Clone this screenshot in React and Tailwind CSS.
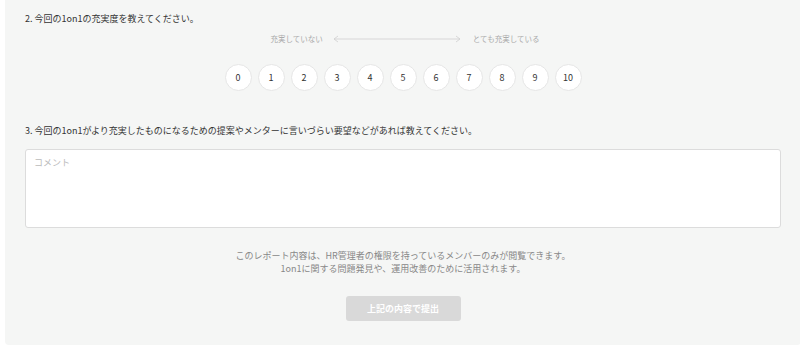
export default function App() {
  const nums = [0, 1, 2, 3, 4, 5, 6, 7, 8, 9, 10];
  return (
    <div className="w-[800px] h-[347px] bg-white overflow-hidden" style={{ fontFamily: '"Noto Sans CJK JP", "Noto Sans", sans-serif' }}>
      <div className="ml-[5px] w-[796px] bg-[#f5f6f5] rounded-b-[4px] px-[20px] pt-[12px] pb-[24px] flex flex-col">
        <p className="text-[9px] leading-[13px] text-[#333]">2. 今回の1on1の充実度を教えてください。</p>
        <div className="mt-[7px] h-[14px] flex items-center justify-center gap-[10px] text-[7.5px] text-[#aaa] pl-[4px]">
          <span>充実していない</span>
          <svg width="128" height="8" viewBox="0 0 128 8" className="block">
            <line x1="1" y1="4" x2="127" y2="4" stroke="#cfcfcf" strokeWidth="0.8" />
            <polyline points="5,1 1,4 5,7" fill="none" stroke="#cfcfcf" strokeWidth="0.8" />
            <polyline points="123,1 127,4 123,7" fill="none" stroke="#cfcfcf" strokeWidth="0.8" />
          </svg>
          <span className="ml-[2px]">とても充実している</span>
        </div>
        <div className="mt-[18px] flex justify-center gap-[6px]">
          {nums.map((n) => (
            <div key={n} className="w-[27px] h-[27px] rounded-full bg-white border border-[#e6e6e6] flex items-center justify-center text-[9px] text-[#333]">
              {n}
            </div>
          ))}
        </div>
        <p className="mt-[33px] text-[9px] leading-[13px] text-[#333]">3. 今回の1on1がより充実したものになるための提案やメンターに言いづらい要望などがあれば教えてください。</p>
        <div className="mt-[12px] h-[79px] bg-white border border-[#dcdcdc] rounded-[3px] px-[8px] pt-[6px] text-[9px] leading-[13px] text-[#bbb]">
          コメント
        </div>
        <div className="mt-[21px] flex flex-col items-center text-[9px] leading-[13px] text-[#888]">
          <p>このレポート内容は、HR管理者の権限を持っているメンバーのみが閲覧できます。</p>
          <p>1on1に関する問題発見や、運用改善のために活用されます。</p>
        </div>
        <div className="mt-[21px] flex justify-center">
          <div className="w-[115px] h-[25px] rounded-[3px] bg-[#d9d9d9] flex items-center justify-center text-[9px] font-bold text-white">
            上記の内容で提出
          </div>
        </div>
      </div>
    </div>
  );
}
